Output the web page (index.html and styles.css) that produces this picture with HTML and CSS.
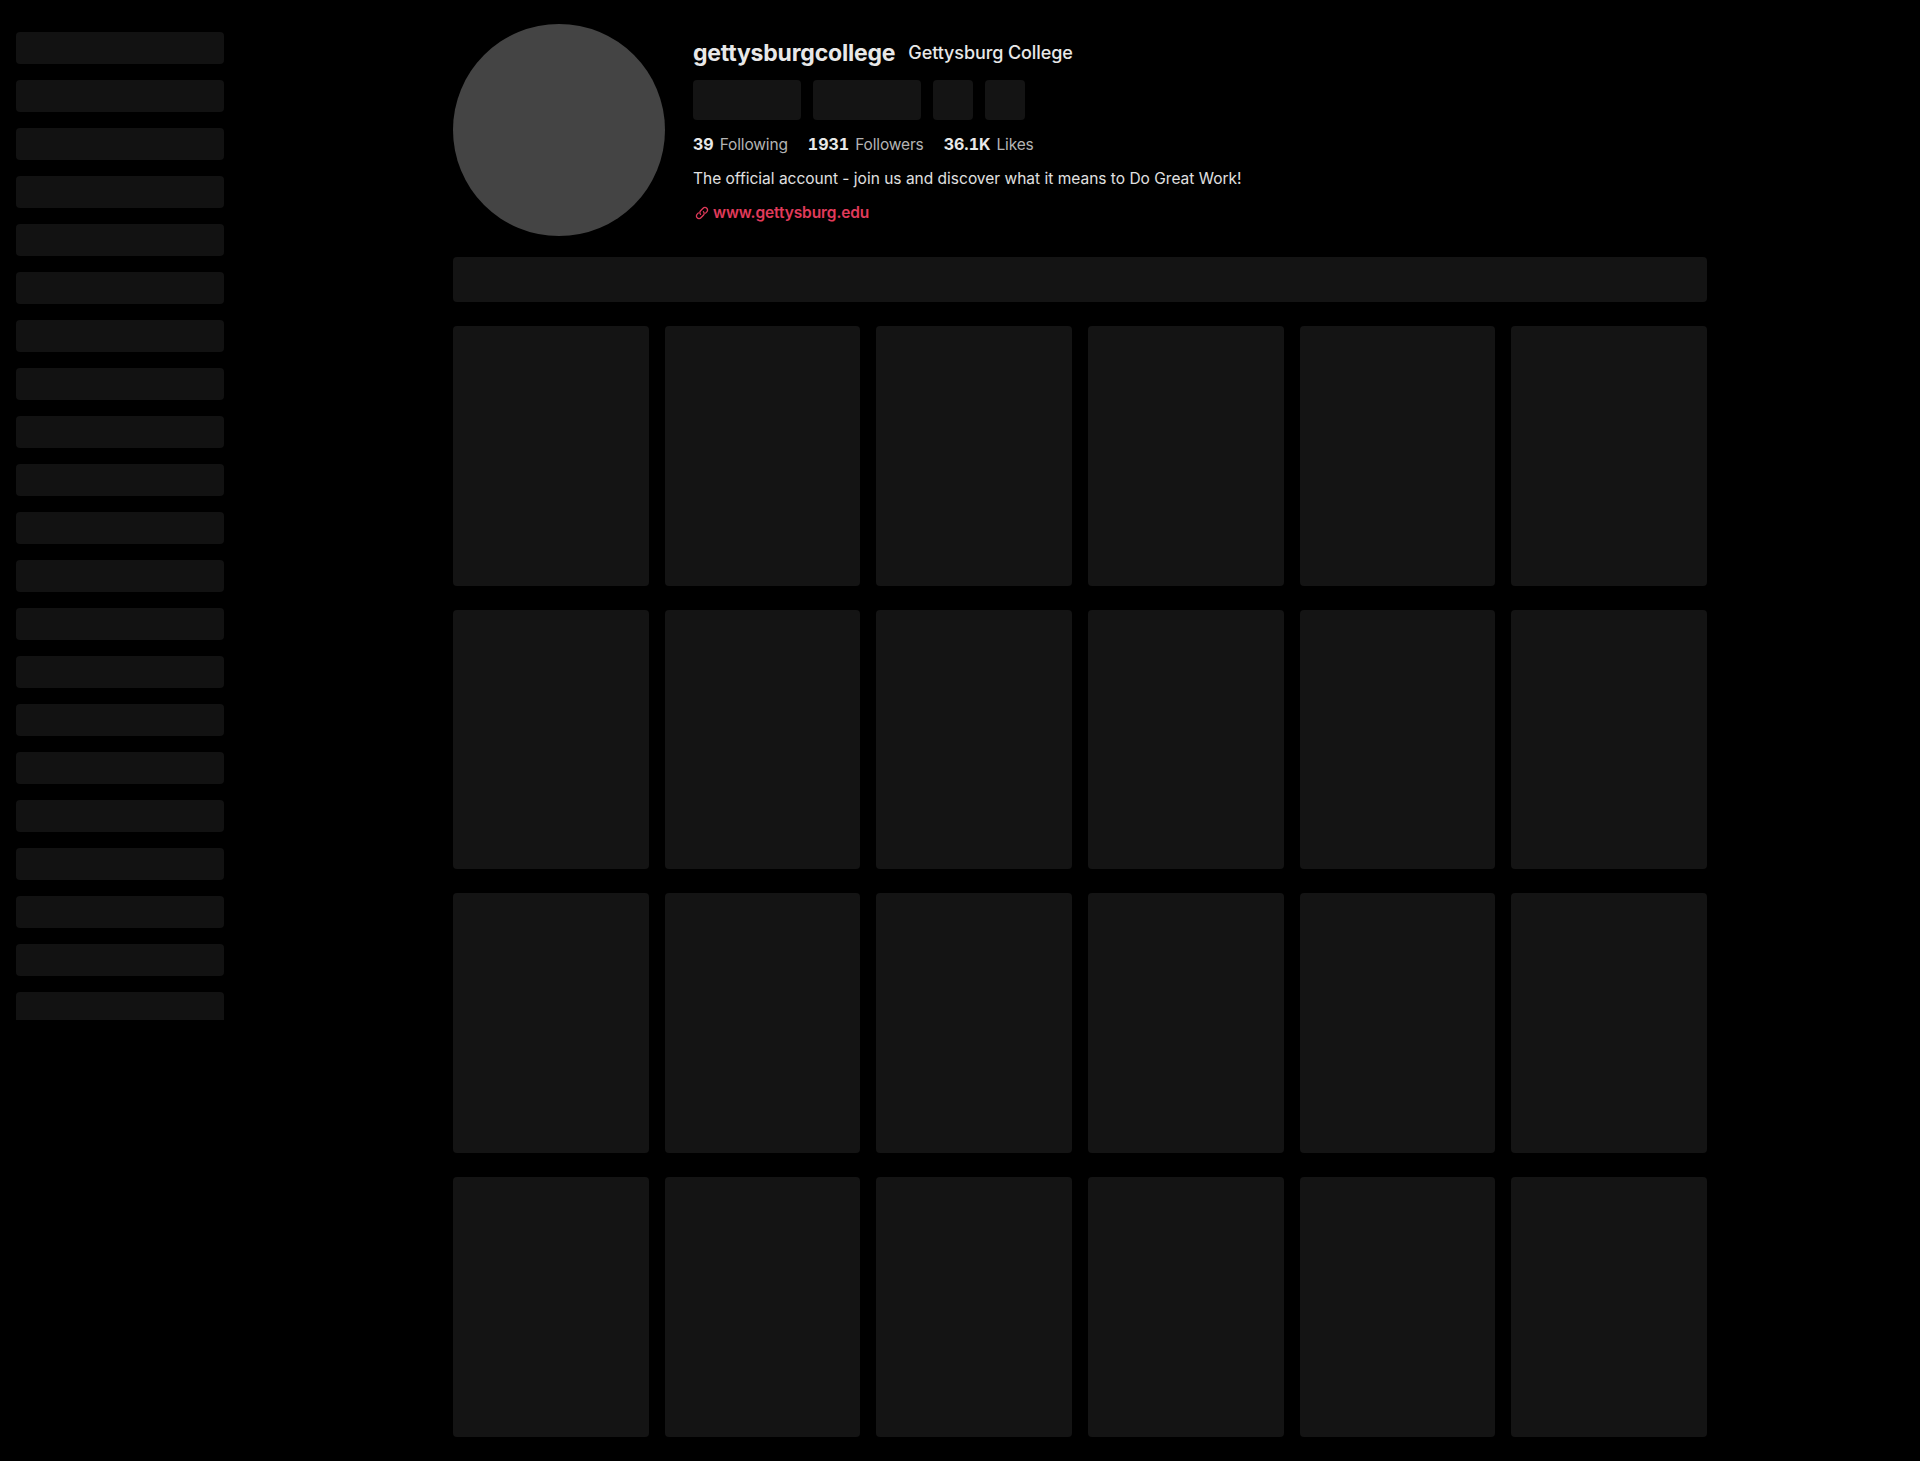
FILE: index.html
```html
<!DOCTYPE html>
<html lang="en">
<head>
    <meta charset="UTF-8">
    <meta name="viewport" content="width=device-width, initial-scale=1.0">
    <title>gettysburgcollege</title>
    <link rel="stylesheet" href="styles.css">
</head>
<body>
    <div class="page">
        <div class="sidebar">
            <div class="side-item"></div><div class="side-item"></div><div class="side-item"></div>
            <div class="side-item"></div><div class="side-item"></div><div class="side-item"></div>
            <div class="side-item"></div><div class="side-item"></div><div class="side-item"></div>
            <div class="side-item"></div><div class="side-item"></div><div class="side-item"></div>
            <div class="side-item"></div><div class="side-item"></div><div class="side-item"></div>
            <div class="side-item"></div><div class="side-item"></div><div class="side-item"></div>
            <div class="side-item"></div><div class="side-item"></div><div class="side-item"></div>
        </div>
        <div class="main">
            <div class="profile">
                <div class="avatar"></div>
                <div class="info">
                    <div class="names">
                        <h1 class="username">gettysburgcollege</h1>
                        <span class="nickname">Gettysburg College</span>
                    </div>
                    <div class="actions">
                        <div class="action wide"></div>
                        <div class="action wide"></div>
                        <div class="action"></div>
                        <div class="action"></div>
                    </div>
                    <div class="stats">
                        <div class="stat"><strong>39</strong><span>Following</span></div>
                        <div class="stat"><strong>1931</strong><span>Followers</span></div>
                        <div class="stat"><strong>36.1K</strong><span>Likes</span></div>
                    </div>
                    <p class="bio">The official account - join us and discover what it means to Do Great Work!</p>
                    <a class="link" href="#">
                        <svg class="link-icon" viewBox="0 0 16 16" fill="none" stroke="currentColor" stroke-width="1.3" stroke-linecap="round">
                            <path d="M6.6 9.4a2.6 2.6 0 0 1 0-3.7l2.5-2.5a2.6 2.6 0 0 1 3.7 3.7l-1.2 1.2"/>
                            <path d="M9.4 6.6a2.6 2.6 0 0 1 0 3.7l-2.5 2.5a2.6 2.6 0 0 1-3.7-3.7l1.2-1.2"/>
                        </svg>
                        www.gettysburg.edu
                    </a>
                </div>
            </div>
            <div class="tabs"></div>
            <div class="grid">
                <div class="card"></div><div class="card"></div><div class="card"></div>
                <div class="card"></div><div class="card"></div><div class="card"></div>
                <div class="card"></div><div class="card"></div><div class="card"></div>
                <div class="card"></div><div class="card"></div><div class="card"></div>
                <div class="card"></div><div class="card"></div><div class="card"></div>
                <div class="card"></div><div class="card"></div><div class="card"></div>
                <div class="card"></div><div class="card"></div><div class="card"></div>
                <div class="card"></div><div class="card"></div><div class="card"></div>
            </div>
        </div>
    </div>
</body>
</html>
```

FILE: styles.css
```css
* {
    box-sizing: border-box;
}
body {
    margin: 0;
    background-color: #000;
    color: #fff;
    font-family: Inter, "Liberation Sans", sans-serif;
}
.page {
    display: flex;
    min-height: 1461px;
}
.sidebar {
    width: 208px;
    height: 988px;
    margin: 32px 0 0 16px;
    overflow: hidden;
    flex-shrink: 0;
}
.side-item {
    height: 32px;
    margin-bottom: 16px;
    border-radius: 4px;
    background-color: #121212;
}
.main {
    width: 1254px;
    margin-left: 229px;
    padding-top: 24px;
}
.profile {
    display: flex;
    gap: 28px;
}
.avatar {
    width: 212px;
    height: 212px;
    border-radius: 50%;
    background-color: #444;
    flex-shrink: 0;
}
.info {
    padding-top: 12px;
}
.names {
    display: flex;
    align-items: center;
    gap: 13px;
    height: 33px;
}
.username {
    margin: 0;
    font-size: 23px;
    font-weight: 700;
    letter-spacing: -0.2px;
    color: #e8e8e8;
}
.nickname {
    font-size: 18px;
    font-weight: 500;
    letter-spacing: -0.1px;
    color: #e8e8e8;
}
.actions {
    display: flex;
    gap: 12px;
    margin-top: 11px;
}
.action {
    width: 40px;
    height: 40px;
    border-radius: 4px;
    background-color: #141414;
}
.action.wide {
    width: 108px;
}
.stats {
    display: flex;
    gap: 20px;
    margin-top: 12px;
    height: 24px;
    align-items: center;
}
.stat {
    display: flex;
    align-items: baseline;
    gap: 6px;
    font-size: 15.5px;
    letter-spacing: -0.15px;
    color: #b4b4b4;
}
.stat strong {
    font-size: 16px;
    font-weight: 700;
    letter-spacing: 0;
    font-feature-settings: "tnum";
    color: #e8e8e8;
}
.bio {
    margin: 11px 0 0;
    font-size: 15.5px;
    line-height: 24px;
    color: #e0e0e0;
}
.link {
    display: flex;
    align-items: center;
    gap: 3px;
    margin-top: 10px;
    font-size: 15.5px;
    line-height: 24px;
    font-weight: 600;
    letter-spacing: -0.1px;
    color: #e13a5a;
    text-decoration: none;
}
.link-icon {
    width: 16px;
    height: 16px;
    margin-left: 1px;
}
.tabs {
    height: 45px;
    margin-top: 21px;
    border-radius: 4px;
    background-color: #141414;
}
.grid {
    display: grid;
    grid-template-columns: repeat(6, 1fr);
    grid-auto-rows: 259.67px;
    gap: 24px 16px;
    margin-top: 24px;
}
.card {
    border-radius: 4px;
    background-color: #141414;
}
```
